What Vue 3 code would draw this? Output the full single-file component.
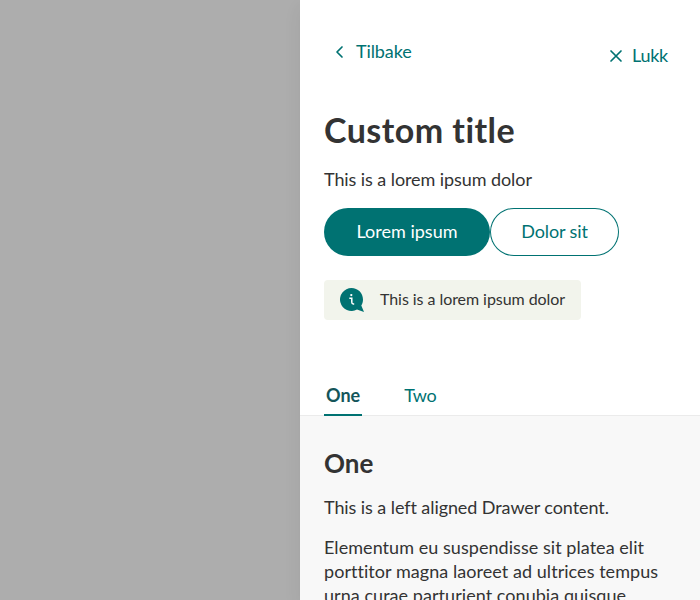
<script setup>
import { ref } from 'vue'

const tabs = ['One', 'Two']
const active = ref('One')
</script>

<template>
  <div class="page">
    <aside class="drawer" role="dialog" aria-label="Custom title">
      <nav class="bar">
        <button class="link back">
          <svg width="16" height="16" viewBox="0 0 16 16" fill="none" stroke="currentColor" stroke-width="1.7" stroke-linecap="round" stroke-linejoin="round">
            <path d="M10 3 5 8l5 5" />
          </svg>
          <span class="back-label">Tilbake</span>
        </button>
        <button class="link close">
          <svg width="16" height="16" viewBox="0 0 16 16" fill="none" stroke="currentColor" stroke-width="1.7" stroke-linecap="round">
            <path d="m3 3 10 10M13 3 3 13" />
          </svg>
          <span class="close-label">Lukk</span>
        </button>
      </nav>
      <header class="head">
        <h1>Custom title</h1>
        <p class="intro">This is a lorem ipsum dolor</p>
        <div class="actions">
          <button class="btn primary">Lorem ipsum</button>
          <button class="btn secondary">Dolor sit</button>
        </div>
        <div class="info">
          <svg width="24" height="24" viewBox="0 0 24 24">
            <path fill="#007272" d="M11.5 0C17.9 0 23 5.1 23 11.5c0 2.2-.6 4.3-1.7 6L24 24l-7-2.4A11.5 11.5 0 1 1 11.5 0Z" />
            <path fill="none" stroke="#fff" stroke-width="1.5" d="M9.3 10.2h2.5v4.1c0 1.2.5 1.7 1.5 1.7h.9" />
            <circle cx="11.3" cy="7.1" r="1.15" fill="#fff" />
          </svg>
          <span>This is a lorem ipsum dolor</span>
        </div>
      </header>
      <div class="tabs" role="tablist">
        <button v-for="tab in tabs" :key="tab" class="tab" :class="{ active: tab === active }" role="tab" @click="active = tab">{{ tab }}</button>
      </div>
      <section class="body">
        <h2>{{ active }}</h2>
        <p class="aligned">This is a left aligned Drawer content.</p>
        <p class="copy">Elementum eu suspendisse sit platea elit porttitor magna laoreet ad ultrices tempus urna curae parturient conubia quisque</p>
      </section>
    </aside>
  </div>
</template>

<style>
body { margin: 0; overflow: hidden; }
</style>

<style scoped>
.page {
  display: flex;
  justify-content: flex-end;
  height: 600px;
  overflow: hidden;
  background: #adadad;
  font-family: Lato, "Liberation Sans", sans-serif;
  font-size: 18px;
  line-height: 24px;
  font-variant-ligatures: none;
  color: #333;
}
.drawer {
  display: flex;
  flex-direction: column;
  width: 400px;
  height: 600px;
  overflow: hidden;
  background: #fff;
  box-shadow: 0 8px 16px rgba(51, 51, 51, 0.08);
}
.bar, .head, .tabs { flex: none; }
button {
  margin: 0;
  padding: 0;
  border: 0;
  background: none;
  font: inherit;
  color: #007272;
  white-space: nowrap;
}
h1, h2, p { margin: 0; }
.bar {
  display: flex;
  justify-content: space-between;
  align-items: flex-start;
  height: 66px;
  padding: 40px 32px 0;
}
.link { display: flex; align-items: center; gap: 8px; }
.link span { padding-bottom: 2px; line-height: 22px; }
.back-label { letter-spacing: -0.1px; }
.close { margin-top: 4px; }
.close-label { letter-spacing: -0.25px; }
.head { padding: 0 24px; }
h1 { font-size: 34px; line-height: 48px; font-weight: 700; letter-spacing: 0.45px; }
.intro { margin-top: 13px; letter-spacing: -0.08px; white-space: nowrap; }
.actions { display: flex; margin-top: 17px; }
.btn { height: 48px; padding-bottom: 2px; border-radius: 24px; }
.primary { width: 166px; background: #007272; color: #fff; }
.secondary { width: 129px; box-shadow: inset 0 0 0 1px #007272; letter-spacing: -0.12px; }
.info {
  display: flex;
  align-items: center;
  gap: 16px;
  width: 257px;
  height: 40px;
  margin-top: 24px;
  padding: 0 16px;
  box-sizing: border-box;
  border-radius: 4px;
  background: #f2f4ec;
  font-size: 16px;
  letter-spacing: -0.06px;
  white-space: nowrap;
}
.info svg { flex: none; }
.info span { padding-bottom: 2px; }
.tabs {
  display: flex;
  gap: 40px;
  height: 40px;
  margin-top: 56px;
  padding: 0 24px;
  box-sizing: border-box;
  box-shadow: inset 0 -1px #ebebeb;
}
.tab { height: 40px; padding: 0 2px; border-bottom: 2px solid transparent; letter-spacing: -0.4px; }
.tab.active { font-weight: 700; color: #14555a; border-bottom-color: #007272; letter-spacing: 0; }
.body { flex: 1; padding: 31px 24px 0; background: #f8f8f8; }
h2 { font-size: 26px; line-height: 32px; font-weight: 700; }
.aligned { margin-top: 16px; letter-spacing: -0.08px; white-space: nowrap; }
.copy { margin-top: 16px; letter-spacing: 0.05px; }
</style>
